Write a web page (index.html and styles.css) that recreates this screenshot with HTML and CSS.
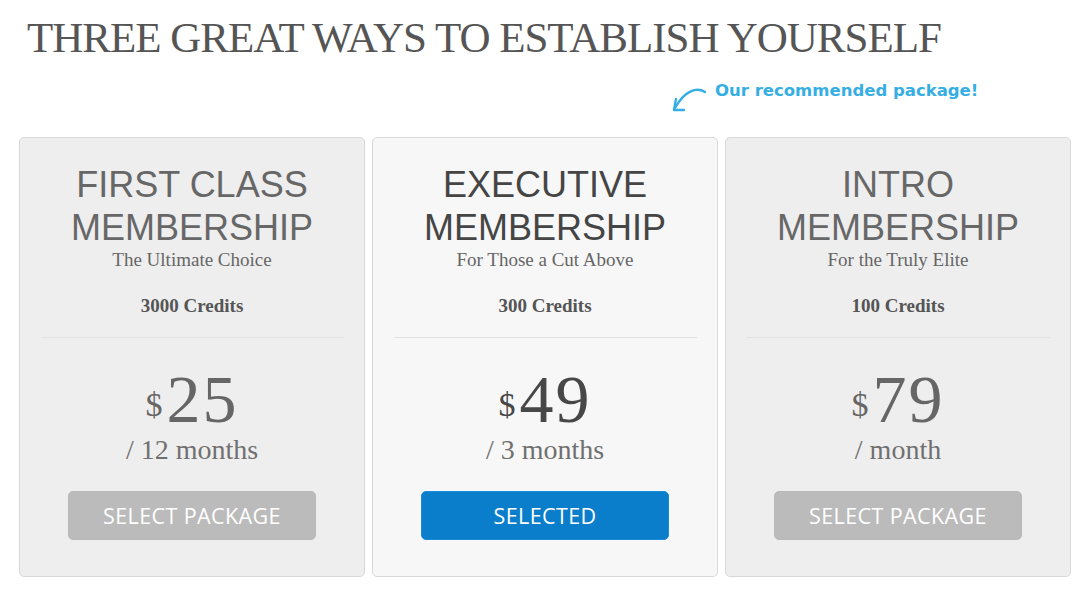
FILE: index.html
```html
<!DOCTYPE html>
<html lang="en">
<head>
    <meta charset="UTF-8">
    <meta name="viewport" content="width=device-width, initial-scale=1.0">
    <title>Membership Packages</title>
    <link rel="stylesheet" href="styles.css">
</head>
<body>

    <h1 class="page-title">THREE GREAT WAYS TO ESTABLISH YOURSELF</h1>

    <div class="recommend">
        <svg class="recommend-arrow" width="40" height="30" viewBox="0 0 40 30">
            <path d="M36 6 C 28 1, 16 4, 6 22" fill="none" stroke="#35aee4" stroke-width="2.4" stroke-linecap="round"/>
            <path d="M7 13 L 5 24 L 15 24" fill="none" stroke="#35aee4" stroke-width="2.4" stroke-linecap="round" stroke-linejoin="round"/>
        </svg>
        <span>Our recommended package!</span>
    </div>

    <div class="plans">
        <div class="plan">
            <h2 class="plan-name">FIRST CLASS<br>MEMBERSHIP</h2>
            <p class="plan-tagline">The Ultimate Choice</p>
            <p class="plan-credits">3000 Credits</p>
            <hr class="plan-divider">
            <div class="plan-price"><span class="currency">$</span>25</div>
            <div class="plan-period">/ 12 months</div>
            <button class="plan-button">SELECT PACKAGE</button>
        </div>

        <div class="plan plan-featured">
            <h2 class="plan-name">EXECUTIVE<br>MEMBERSHIP</h2>
            <p class="plan-tagline">For Those a Cut Above</p>
            <p class="plan-credits">300 Credits</p>
            <hr class="plan-divider">
            <div class="plan-price"><span class="currency">$</span>49</div>
            <div class="plan-period">/ 3 months</div>
            <button class="plan-button selected">SELECTED</button>
        </div>

        <div class="plan">
            <h2 class="plan-name">INTRO<br>MEMBERSHIP</h2>
            <p class="plan-tagline">For the Truly Elite</p>
            <p class="plan-credits">100 Credits</p>
            <hr class="plan-divider">
            <div class="plan-price"><span class="currency">$</span>79</div>
            <div class="plan-period">/ month</div>
            <button class="plan-button">SELECT PACKAGE</button>
        </div>
    </div>

</body>
</html>
```

FILE: styles.css
```css
/* Estilos gerais */
body {
    margin: 0;
    padding: 14px 19px 0 19px;
    background-color: #ffffff;
    font-family: "Liberation Serif", "Times New Roman", serif;
    color: #666;
}

.page-title {
    margin: 0 0 0 8px;
    font-family: "Liberation Serif", "Times New Roman", serif;
    font-size: 43px;
    font-weight: normal;
    line-height: 48px;
    letter-spacing: -1px;
    color: #555;
}

/* Nota do pacote recomendado */
.recommend {
    display: flex;
    align-items: flex-start;
    gap: 6px;
    margin-left: 650px;
    margin-top: 18px;
    height: 57px;
}

.recommend-arrow {
    margin-top: 6px;
}

.recommend span {
    font-family: "DejaVu Sans", Verdana, sans-serif;
    font-weight: bold;
    font-size: 16.5px;
    line-height: 22px;
    color: #35aee4;
}

/* Cartoes */
.plans {
    display: grid;
    grid-template-columns: repeat(3, 1fr);
    gap: 7px;
}

.plan {
    display: flex;
    flex-direction: column;
    align-items: center;
    padding: 25px 0 36px 0;
    background-color: #eeeeee;
    border: 1px solid #d9d9d9;
    border-radius: 5px;
    text-align: center;
}

.plan-featured {
    background-color: #f7f7f7;
}

.plan-name {
    margin: 0;
    font-family: "Liberation Sans", Arial, sans-serif;
    font-size: 36px;
    font-weight: normal;
    line-height: 43px;
    color: #676767;
}

.plan-featured .plan-name {
    color: #454545;
}

.plan-tagline {
    margin: 0;
    font-size: 19px;
    line-height: 22px;
    color: #666;
}

.plan-credits {
    margin: 24px 0 0 0;
    font-size: 19px;
    font-weight: bold;
    line-height: 22px;
    color: #555;
}

.plan-divider {
    align-self: stretch;
    margin: 20px 20px 0 21px;
    border: 0;
    border-top: 1px solid #e2e2e2;
}

.plan-price {
    margin-top: 26px;
    font-size: 68px;
    line-height: 70px;
    letter-spacing: 2px;
    color: #666;
}

.plan-featured .plan-price {
    color: #474747;
}

.currency {
    font-size: 34px;
    vertical-align: 6px;
    margin-right: 4px;
    letter-spacing: 0;
}

.plan-period {
    margin-top: -5px;
    font-size: 28px;
    line-height: 30px;
    color: #707070;
}

.plan-button {
    margin-top: 26px;
    width: 248px;
    height: 49px;
    padding: 0;
    border: 1px solid #b9b9b9;
    border-radius: 5px;
    background-color: #bbbbbb;
    color: #ffffff;
    font-family: "Open Sans", sans-serif;
    font-size: 21.5px;
    letter-spacing: 0.4px;
    cursor: pointer;
}

.plan-button.selected {
    background-color: #0a7dcb;
    border-color: #1a8cd8;
}
```
